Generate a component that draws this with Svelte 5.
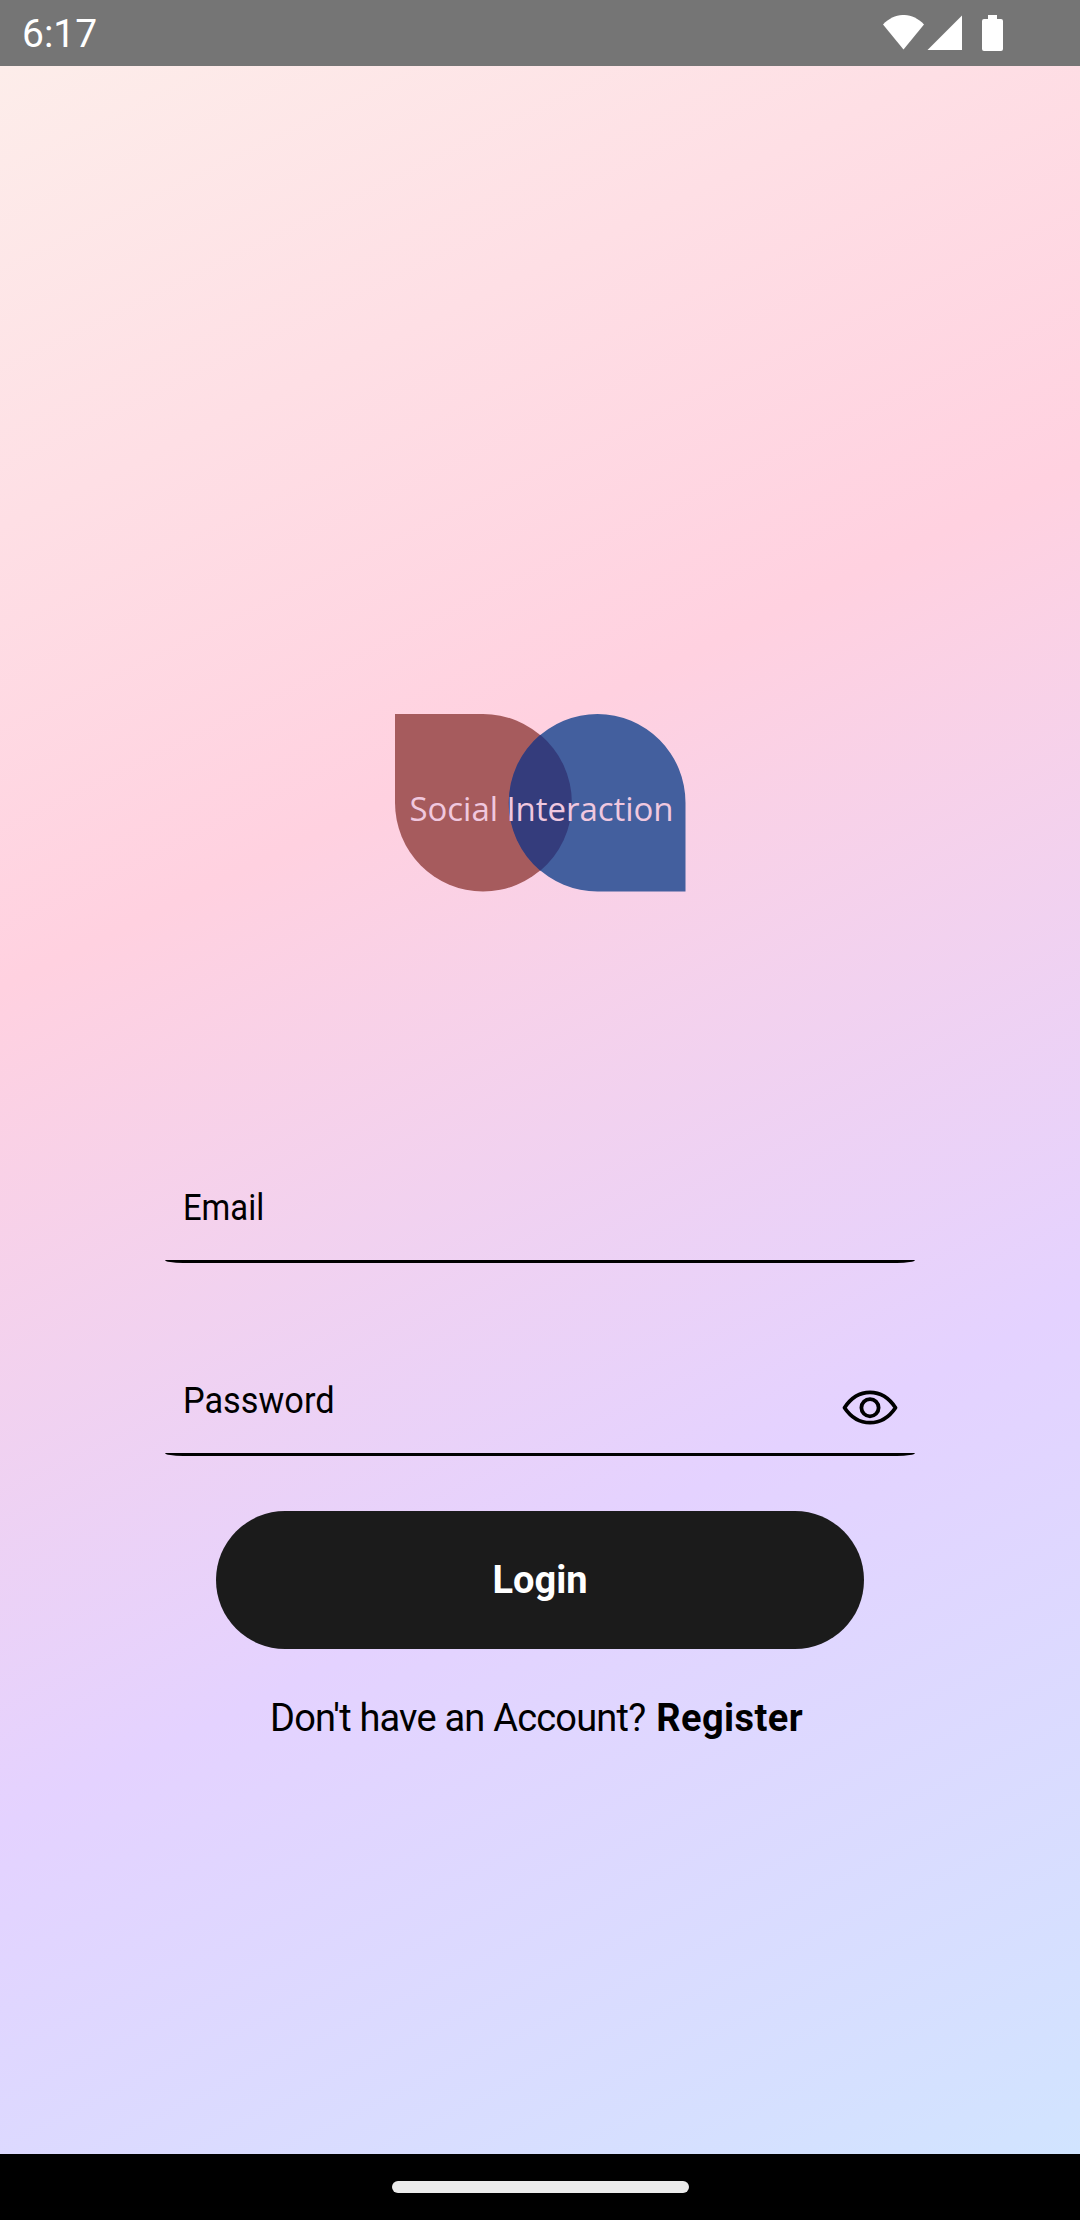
<script>
  let email = $state('');
  let password = $state('');
  let visible = $state(false);
</script>

<div class="screen">
  <header class="status">
    <span class="clock">6:17</span>
    <svg class="indicators" width="124" height="40" viewBox="0 0 124 40" aria-hidden="true">
      <path d="M0 9.5C12-3.2 29-3.2 41 9.5L20.5 34.5Z" />
      <path d="M44.5 35L79 .5V35Z" />
      <path d="M105 0h9v4h4a2 2 0 0 1 2 2v28a2 2 0 0 1-2 2h-17a2 2 0 0 1-2-2V6a2 2 0 0 1 2-2h4Z" />
    </svg>
  </header>

  <main>
    <svg class="logo" width="291" height="178" viewBox="0 0 291 178">
      <path class="red" d="M0 0H88A88.5 88.75 0 0 1 88 177.5A88 88.75 0 0 1 0 88.75Z" />
      <path class="blue" d="M290.5 177.5H202.5A88.5 88.75 0 0 1 202.5 0A88 88.75 0 0 1 290.5 88.75Z" />
      <path class="overlap" d="M145.3 20.8A88.5 88.75 0 0 1 145.3 156.7A88.5 88.75 0 0 1 145.3 20.8Z" />
      <text x="14.5" y="106.5" textLength="264">Social Interaction</text>
    </svg>

    <form onsubmit={(e) => e.preventDefault()}>
      <div class="field">
        <div class="row">
          <input class="email" type="text" placeholder="Email" bind:value={email} />
        </div>
        <div class="underline"></div>
      </div>
      <div class="field">
        <div class="row">
          <input class="password" type={visible ? 'text' : 'password'} placeholder="Password" bind:value={password} />
          <button class="eye" type="button" aria-label="Show password" onclick={() => (visible = !visible)}>
            <svg width="56" height="36" viewBox="0 0 56 36">
              <path d="M2.5 17.7C16-2.7 40-2.7 53.5 17.7C40 37.7 16 37.7 2.5 17.7Z" />
              <circle cx="28" cy="17.7" r="8.6" />
            </svg>
          </button>
        </div>
        <div class="underline"></div>
      </div>
      <button class="login" type="submit"><span>Login</span></button>
    </form>

    <p class="signup"><span>Don't have an Account?</span><b>Register</b></p>
  </main>

  <footer><div class="handle"></div></footer>
</div>

<style>
  :global(body) {
    margin: 0;
  }
  .screen {
    width: 1080px;
    height: 2220px;
    display: flex;
    flex-direction: column;
    font-family: Roboto, 'Liberation Sans', sans-serif;
    color: #000;
  }
  .status {
    box-sizing: border-box;
    height: 66px;
    padding: 0 73px 0 22px;
    display: flex;
    justify-content: space-between;
    align-items: flex-start;
    background: #757575;
    color: #fff;
  }
  .clock {
    font-size: 39px;
    line-height: 69px;
  }
  .indicators {
    margin-top: 15px;
    fill: #fff;
  }
  main {
    flex: 1;
    display: flex;
    flex-direction: column;
    align-items: center;
    background: linear-gradient(154.2deg, #fdedea 0%, #ffd1e0 35.3%, #e4d2ff 67.4%, #d1e4ff 100%);
  }
  .logo {
    margin-top: 648px;
    overflow: visible;
  }
  .red {
    fill: #a65b5d;
  }
  .blue {
    fill: #435f9e;
  }
  .overlap {
    fill: #343c7c;
  }
  .logo text {
    font: 33px 'Open Sans', 'Noto Sans', sans-serif;
    fill: #f0c8df;
  }
  form {
    width: 750px;
    margin-top: 231px;
    display: flex;
    flex-direction: column;
    align-items: center;
  }
  .field {
    width: 750px;
    margin-bottom: 53px;
  }
  .row {
    box-sizing: border-box;
    height: 137px;
    padding: 30px 17px 0 18px;
    display: flex;
    align-items: flex-start;
  }
  .underline {
    height: 3px;
    border-radius: 0 0 18px 18px / 0 0 3px 3px;
    background: #000;
  }
  input {
    flex: 1;
    min-width: 0;
    height: 110px;
    padding: 0;
    border: 0;
    outline: 0;
    background: none;
    font: 36px Roboto, sans-serif;
    color: #000;
    transform-origin: left;
  }
  input::placeholder {
    color: #000;
    opacity: 1;
  }
  .email {
    transform: scaleX(0.91);
  }
  .password {
    transform: scaleX(0.953);
  }
  button {
    border: 0;
    padding: 0;
    background: none;
    font-family: inherit;
    cursor: pointer;
  }
  .eye {
    height: 36px;
    margin-top: 44px;
  }
  .eye svg {
    display: block;
    fill: none;
    stroke: #000;
    stroke-width: 3.8;
    stroke-linejoin: round;
  }
  .login {
    width: 648px;
    height: 138px;
    margin-top: 2px;
    border-radius: 69px;
    background: #1b1b1b;
    color: #fff;
    font-size: 38px;
    font-weight: 700;
  }
  .signup {
    margin: 46px 7px 0 0;
    display: flex;
    gap: 11px;
    font-size: 38px;
    line-height: 46px;
  }
  .signup span {
    letter-spacing: -0.8px;
  }
  .signup b {
    letter-spacing: 0.4px;
  }
  footer {
    height: 66px;
    display: flex;
    justify-content: center;
    align-items: center;
    background: #000;
  }
  .handle {
    width: 297px;
    height: 12px;
    border-radius: 6px;
    background: #ebebeb;
  }
</style>
